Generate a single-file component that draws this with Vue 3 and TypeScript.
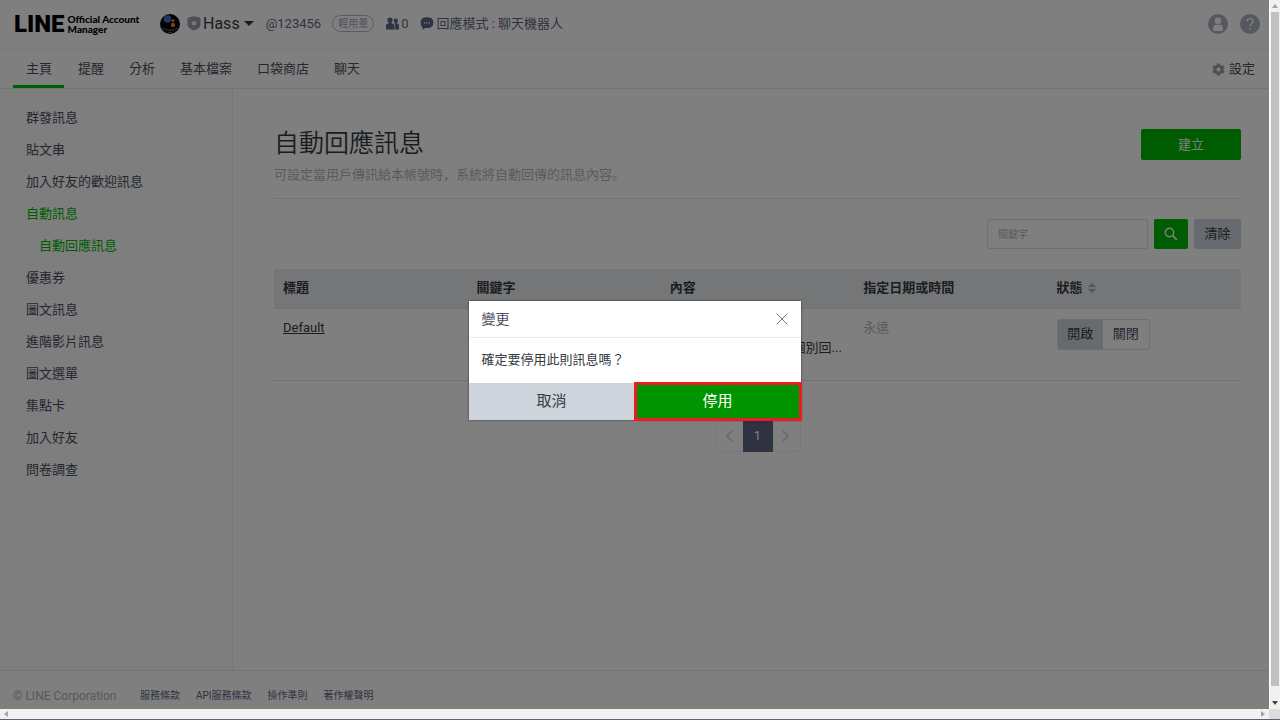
<script setup lang="ts">
import { ref } from 'vue'

interface SideItem {
  label: string
  active?: boolean
  child?: boolean
}

const tabs: string[] = ['主頁', '提醒', '分析', '基本檔案', '口袋商店', '聊天']
const sideItems: SideItem[] = [
  { label: '群發訊息' },
  { label: '貼文串' },
  { label: '加入好友的歡迎訊息' },
  { label: '自動訊息', active: true },
  { label: '自動回應訊息', active: true, child: true },
  { label: '優惠券' },
  { label: '圖文訊息' },
  { label: '進階影片訊息' },
  { label: '圖文選單' },
  { label: '集點卡' },
  { label: '加入好友' },
  { label: '問卷調查' },
]
const footerLinks: string[] = ['服務條款', 'API服務條款', '操作準則', '著作權聲明']
const keyword = ref('')
const dialogOpen = ref(true)
</script>

<template>
  <div class="window">
    <div class="viewport">
      <div class="page">
        <header class="topbar">
          <a class="logo" href="#">
            <span class="logo-line">LINE</span>
            <span class="logo-sub">Official Account<br />Manager</span>
          </a>
          <svg class="avatar" viewBox="0 0 20 20" width="20" height="20" aria-hidden="true">
            <circle cx="10" cy="10" r="10" fill="#05070d" />
            <circle cx="7.5" cy="5" r="3.8" fill="#3d6fc6" />
            <circle cx="13" cy="6.500" r="1.6" fill="#d08030" />
            <circle cx="13" cy="11" r="2.2" fill="#e88a20" />
            <path d="M2.5 14l3 2M17.500 14l-3 2" stroke="#2d5eb0" stroke-width="1.2" />
            <path d="M6 16.500l2-1 2 1.200 2-1.200 2 1M8 18.300h4" stroke="#9a6a48" stroke-width="1" fill="none" />
          </svg>
          <button class="account" type="button">
            <svg viewBox="0 0 14 15" width="14" height="15" aria-hidden="true">
              <path d="M7 .3l5.500 1.200q1 .2 1 1.200V8.500c0 3-3.500 5-6.500 6-3-1-6.500-3-6.500-6V2.700q0-1 1-1.200z" fill="#9a9faf" />
              <path d="M7 4l.9 1.900 2.100.3-1.500 1.500.35 2.100L7 8.800 5.150 9.800 5.500 7.700 4 6.200l2.100-.3z" fill="#fff" />
            </svg>
            <span class="account-name">Hass</span>
            <svg class="caret" viewBox="0 0 10 5" width="10" height="5" aria-hidden="true"><path d="M0 0h10L5 5z" fill="#353a40" /></svg>
          </button>
          <span class="account-id">@123456</span>
          <span class="plan">輕用量</span>
          <span class="stat friends">
            <svg viewBox="0 0 13 13" width="13" height="13" aria-hidden="true">
              <path d="M4 .5a2.600 2.600 0 0 1 2.600 2.600c0 1.200-.5 2-1.200 2.500v.7l2.200.7q.9.300.9 1.300v4.200H0V8.300q0-1 1-1.300l1.700-.7v-.7C2 5.100 1.400 4.300 1.400 3.100A2.600 2.600 0 0 1 4 .5z" fill="#616783" />
              <path d="M9.800 1.500a2.100 2.100 0 0 1 2.100 2.100c0 1-.4 1.700-1 2.100v.7l1.400.5q.7.300.7 1.100v4.500H9.200V8q0-1.200-1-1.600l.5-.2v-.5c-.6-.4-1-1.100-1-2.100a2.100 2.100 0 0 1 2.100-2.100z" fill="#616783" />
            </svg>
            0
          </span>
          <span class="stat mode">
            <svg viewBox="0 0 14 13" width="14" height="13" aria-hidden="true">
              <path d="M7 .3C11.300.3 13.300 2 13.300 5.700S11.300 11 7 11q-.9 0-1.700-.1L2.500 12.800V10C1.200 9.100.700 7.700.700 5.700.700 2 2.700.3 7 .3z" fill="#616783" />
              <path d="M4 5.200h1.200v1.200H4zM6.400 5.200h1.200v1.200H6.400zM8.800 5.200H10v1.200H8.800z" fill="#fff" />
            </svg>
            回應模式 : 聊天機器人
          </span>
          <div class="top-actions">
            <button type="button" aria-label="帳號">
              <svg viewBox="0 0 20 20" width="20" height="20" aria-hidden="true">
                <circle cx="10" cy="10" r="10" fill="#aab2bc" />
                <circle cx="10" cy="6.8" r="3.3" fill="#fff" />
                <path d="M7.7 10.7h4.6q2.7.8 2.7 3.6v1.2q0 1.5-1.5 1.5h-7Q5 17 5 15.5v-1.2q0-2.8 2.7-3.6z" fill="#fff" />
              </svg>
            </button>
            <button type="button" aria-label="說明">
              <svg viewBox="0 0 20 20" width="20" height="20" aria-hidden="true">
                <circle cx="10" cy="10" r="10" fill="#aab2bc" />
                <path d="M7 7.5C7 5.7 8.2 4.7 10 4.7s3 1 3 2.7c0 2.3-2.9 2.3-2.9 4.9" stroke="#fff" stroke-width="1.3" fill="none" />
                <circle cx="10.1" cy="14.7" r=".9" fill="#fff" />
              </svg>
            </button>
          </div>
        </header>

        <nav class="tabs" aria-label="主選單">
          <a v-for="(tab, i) in tabs" :key="tab" href="#" class="tab" :class="{ current: i === 0 }">{{ tab }}</a>
          <a href="#" class="settings">
            <svg viewBox="0 0 14 14" width="13" height="13" aria-hidden="true">
              <path fill-rule="evenodd" fill="#9aa1ab" d="M5.300.5h3.400l.4 1.900 1 .6 1.900-.6 1.700 2.900-1.500 1.200v1l1.500 1.200-1.700 2.900-1.900-.6-1 .6-.4 1.900H5.300l-.4-1.900-1-.6-1.900.6L.3 8.700l1.500-1.200v-1L.3 5.300 2 2.400l1.900.6 1-.6zM7 4.900a2.100 2.100 0 1 0 0 4.200 2.100 2.100 0 0 0 0-4.200z" />
            </svg>
            設定
          </a>
        </nav>

        <div class="body">
          <aside class="sidebar">
            <a
              v-for="item in sideItems"
              :key="item.label"
              href="#"
              class="side-item"
              :class="{ active: item.active, child: item.child }"
            >{{ item.label }}</a>
          </aside>

          <main class="main">
            <div class="heading">
              <div>
                <h1>自動回應訊息</h1>
                <p>可設定當用戶傳訊給本帳號時，系統將自動回傳的訊息內容。</p>
              </div>
              <button type="button" class="btn primary create">建立</button>
            </div>

            <form class="search" @submit.prevent>
              <input v-model="keyword" type="text" placeholder="關鍵字" aria-label="關鍵字" />
              <button type="submit" class="btn primary find" aria-label="搜尋">
                <svg viewBox="0 0 14 14" width="14" height="14" aria-hidden="true">
                  <circle cx="5.5" cy="5.5" r="4.2" fill="none" stroke="#fff" stroke-width="1.4" />
                  <path d="M8.6 8.6L13 13" stroke="#fff" stroke-width="1.7" />
                </svg>
              </button>
              <button type="button" class="btn clear" @click="keyword = ''">清除</button>
            </form>

            <table>
              <thead>
                <tr>
                  <th scope="col">標題</th>
                  <th scope="col">關鍵字</th>
                  <th scope="col">內容</th>
                  <th scope="col">指定日期或時間</th>
                  <th scope="col">
                    狀態
                    <svg class="sort" viewBox="0 0 8 10" width="8" height="10" aria-hidden="true"><path d="M4 0l4 4H0zM4 10L0 6h8z" fill="#a5abb5" /></svg>
                  </th>
                </tr>
              </thead>
              <tbody>
                <tr>
                  <td><a class="item-link" href="#">Default</a></td>
                  <td></td>
                  <td class="message">感謝您的訊息！<br />非常抱歉, 本帳號無法個別回...</td>
                  <td class="muted">永遠</td>
                  <td>
                    <div class="toggle">
                      <button type="button" class="on">開啟</button>
                      <button type="button">關閉</button>
                    </div>
                  </td>
                </tr>
              </tbody>
            </table>

            <nav class="pager" aria-label="分頁">
              <button type="button" aria-label="上一頁">
                <svg viewBox="0 0 8 12" width="8" height="12" aria-hidden="true"><path d="M7 1L2 6l5 5" fill="none" stroke="#d4d8de" stroke-width="2" /></svg>
              </button>
              <button type="button" class="current">1</button>
              <button type="button" aria-label="下一頁">
                <svg viewBox="0 0 8 12" width="8" height="12" aria-hidden="true"><path d="M1 1l5 5-5 5" fill="none" stroke="#d4d8de" stroke-width="2" /></svg>
              </button>
            </nav>
          </main>
        </div>

        <footer class="footer">
          <span class="copyright">© LINE Corporation</span>
          <a v-for="link in footerLinks" :key="link" href="#">{{ link }}</a>
        </footer>
      </div>

      <div v-if="dialogOpen" class="overlay">
        <section class="dialog" role="dialog" aria-modal="true" aria-labelledby="dialog-title">
          <header class="dialog-head">
            <h2 id="dialog-title">變更</h2>
            <button type="button" aria-label="關閉視窗" @click="dialogOpen = false">
              <svg viewBox="0 0 12 12" width="12" height="12" aria-hidden="true"><path d="M.5.5l11 11M11.5.5l-11 11" stroke="#777" stroke-width="1" /></svg>
            </button>
          </header>
          <p>確定要停用此則訊息嗎？</p>
          <div class="dialog-actions">
            <button type="button" class="cancel" @click="dialogOpen = false">取消</button>
            <button type="button" class="confirm" @click="dialogOpen = false">停用</button>
          </div>
        </section>
      </div>
    </div>

    <div class="vscroll" aria-hidden="true">
      <svg viewBox="0 0 6 4" width="6" height="4"><path d="M3 0l3 4H0z" fill="#a3a3a3" /></svg>
      <span class="thumb"></span>
      <svg viewBox="0 0 6 4" width="6" height="4"><path d="M0 0h6L3 4z" fill="#444" /></svg>
    </div>
    <div class="hscroll" aria-hidden="true">
      <svg viewBox="0 0 4 6" width="4" height="6"><path d="M4 0v6L0 3z" fill="#a3a3a3" /></svg>
      <svg viewBox="0 0 4 6" width="4" height="6"><path d="M0 0v6l4-3z" fill="#a3a3a3" /></svg>
    </div>
    <div class="corner"></div>
  </div>
</template>

<style>
body {
  margin: 0;
}
</style>

<style scoped>
.window {
  display: grid;
  grid-template-columns: minmax(0, 1fr) 11px;
  grid-template-rows: minmax(0, 1fr) 10px;
  height: 100vh;
  box-sizing: border-box;
  border-bottom: 1px solid #50657c;
  font-family: Roboto, "Noto Sans CJK TC", sans-serif;
  font-size: 13px;
  line-height: 20px;
  color: #494f5c;
}
.window * {
  box-sizing: border-box;
}
.viewport {
  position: relative;
  overflow: hidden;
}
.page {
  display: flex;
  flex-direction: column;
  min-height: 100%;
  background: #fff;
}
a {
  color: inherit;
  text-decoration: none;
}
button {
  font: inherit;
  color: inherit;
  border: 0;
  padding: 0;
  background: none;
  cursor: pointer;
}
svg {
  display: block;
  flex: none;
}

.topbar {
  display: flex;
  align-items: center;
  height: 50px;
  padding: 0 9px 2px 14px;
  border-bottom: 1px solid #efeff2;
  white-space: nowrap;
}
.logo {
  display: flex;
  align-items: center;
  gap: 3px;
  width: 146px;
  color: #000;
}
.logo-line {
  font-weight: 900;
  font-size: 24px;
  line-height: 24px;
}
.logo-sub {
  font-family: Lato, sans-serif;
  font-weight: 900;
  font-size: 10px;
  line-height: 10px;
}
.account {
  display: flex;
  align-items: center;
  margin-left: 7px;
  color: #353a40;
}
.account-name {
  margin: 0 4px 0 2px;
  font-size: 16px;
}
.account-id {
  margin-left: 12px;
  color: #616783;
}
.plan {
  margin-left: 11px;
  padding: 0 5px;
  border: 1px solid #b0b6c6;
  border-radius: 9px;
  font-size: 10px;
  line-height: 15px;
  color: #a0a7b8;
}
.stat {
  display: flex;
  align-items: center;
  gap: 2px;
  margin-left: 12px;
  color: #616783;
}
.top-actions {
  display: flex;
  gap: 12px;
  margin-left: auto;
}

.tabs {
  display: flex;
  height: 39px;
  padding: 0 14px 0 13px;
  border-bottom: 1px solid #e6e6e9;
}
.tab {
  padding: 9px 12px 6px 13px;
  border-bottom: 3px solid transparent;
}
.tab.current {
  margin-right: 1px;
  border-color: #00b900;
}
.settings {
  display: flex;
  align-items: center;
  gap: 4px;
  margin-left: auto;
}

.body {
  display: flex;
  flex: 1;
}
.sidebar {
  flex: none;
  width: 233px;
  padding: 13px 0;
  border-right: 1px solid #efeff2;
  background: #fcfcfd;
}
.side-item {
  display: block;
  padding: 6px 26px;
}
.side-item.child {
  padding-left: 39px;
}
.side-item.active {
  color: #00b900;
}
.main {
  flex: 1;
  min-width: 0;
  padding: 36px 28px 0 41px;
}
.heading {
  display: flex;
  justify-content: space-between;
  align-items: flex-start;
  padding-bottom: 14px;
  border-bottom: 1px solid #e6e6e9;
}
h1 {
  margin: 0;
  font-size: 25px;
  font-weight: 350;
  line-height: 38px;
  color: #353a40;
}
.heading p {
  margin: 1px 0 0;
  font-family: "Noto Sans CJK SC", sans-serif;
  color: #b0b7c1;
}
.btn {
  height: 30px;
  border-radius: 2px;
}
.primary {
  background: #00b900;
  color: #fff;
}
.create {
  width: 100px;
  height: 31px;
  margin-top: 4px;
}
.search {
  display: flex;
  justify-content: flex-end;
  gap: 6px;
  margin: 20px 0;
}
.search input {
  width: 161px;
  height: 30px;
  padding: 0 10px;
  border: 1px solid #dcdfe5;
  border-radius: 2px;
  background: #fff;
  font: inherit;
  font-size: 10px;
}
.search input::placeholder {
  color: #b0b7c1;
}
.find {
  display: grid;
  place-items: center;
  width: 34px;
}
.clear {
  width: 47px;
  background: #ced4dc;
  color: #353a40;
}

table {
  width: 100%;
  table-layout: fixed;
  border-collapse: collapse;
}
th {
  height: 39px;
  padding: 0 9px;
  background: #eaedf1;
  border-bottom: 1px solid #e2e4e8;
  text-align: left;
  font-weight: 700;
  color: #353a40;
}
.sort {
  display: inline-block;
  margin-left: 2px;
  vertical-align: -1px;
}
td {
  height: 72px;
  padding: 9px 9px 0;
  border-bottom: 1px solid #e2e4e8;
  vertical-align: top;
  white-space: nowrap;
}
.item-link {
  color: #353a40;
  text-decoration: underline;
}
.message {
  color: #353a40;
}
.muted {
  color: #b0b7c1;
}
.toggle {
  display: flex;
  width: 93px;
  height: 31px;
  margin-top: 1px;
  border: 1px solid #dcdfe5;
  border-radius: 2px;
}
.toggle button {
  flex: 1;
}
.toggle .on {
  background: #ced4dc;
  color: #353a40;
}

.pager {
  display: flex;
  width: 86px;
  margin: 40px auto 0;
  border: 1px solid #eceef1;
  border-radius: 2px;
}
.pager button {
  display: grid;
  place-items: center;
  flex: 1;
  height: 29px;
}
.pager .current {
  flex: none;
  width: 30px;
  height: 31px;
  margin: -1px 0;
  background: #5f6480;
  color: #fff;
}

.footer {
  display: flex;
  align-items: center;
  gap: 16px;
  height: 39px;
  padding: 11px 13px 0;
  border-top: 1px solid #e6e6e9;
  font-size: 10px;
  color: #616783;
  white-space: nowrap;
}
.copyright {
  width: 111px;
  font-size: 12px;
  color: #aab2bc;
}

.overlay {
  position: absolute;
  inset: 0;
  display: flex;
  justify-content: center;
  align-items: flex-start;
  padding-top: 301px;
  background: rgba(0, 0, 0, 0.5);
}
.dialog {
  width: 332px;
  background: #fff;
  box-shadow: 0 0 2px rgba(0, 0, 0, 0.6);
}
.dialog-head {
  display: flex;
  justify-content: space-between;
  align-items: center;
  height: 37px;
  padding: 0 13px 1px;
  border-bottom: 1px solid #ececec;
}
h2 {
  margin: 0;
  font-size: 14px;
  font-weight: 400;
}
.dialog p {
  margin: 0;
  padding: 12px 13px 13px;
  color: #353a40;
}
.dialog-actions {
  display: flex;
}
.dialog-actions button {
  flex: 1;
  height: 37px;
  padding-bottom: 2px;
  font-size: 15px;
}
.cancel {
  background: #ced4dc;
  color: #353a40;
}
.dialog-actions .confirm {
  background: #009400;
  color: #fff;
  outline: 3px solid #ed1c24;
  outline-offset: -2px;
}

.vscroll {
  display: flex;
  flex-direction: column;
  align-items: center;
  justify-content: space-between;
  padding: 4px 0;
  border-left: 1px solid #fff;
  background: #f1f1f1;
}
.thumb {
  flex: 1;
  width: 8px;
  margin: 4px 0 15px;
  background: #c1c1c1;
}
.hscroll {
  display: flex;
  align-items: center;
  justify-content: space-between;
  padding: 0 4px;
  background: #f1f1f1;
}
.corner {
  background: #dcdcdc;
}
</style>
